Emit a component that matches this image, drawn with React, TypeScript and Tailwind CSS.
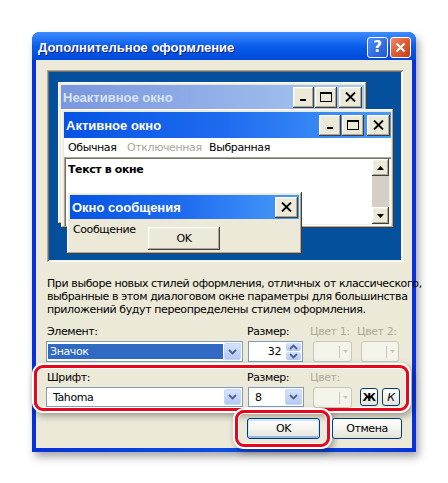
import React from 'react';

const classic =
  'bg-[#ece9d8] shadow-[inset_-1px_-1px_#404040,inset_1px_1px_#ffffff,inset_-2px_-2px_#aca899,inset_2px_2px_#f1efe2]';
const sunken =
  'shadow-[inset_1px_1px_#aca899,inset_2px_2px_#716f64,inset_-1px_-1px_#ffffff,inset_-2px_-2px_#f1efe2]';
const xpBtn =
  'rounded-[3px] border border-[#003c74] bg-gradient-to-b from-[#ffffff] via-[#f4f3ee] to-[#e3e2da] flex items-center justify-center';
const capText = "font-['Liberation_Sans',sans-serif] font-bold text-[13px] tracking-[0px] whitespace-nowrap";

function CapMin() {
  return (
    <svg width="11" height="10" viewBox="0 0 11 10">
      <rect x="2" y="7" width="6" height="2" fill="#000" />
    </svg>
  );
}

function CapMax() {
  return (
    <svg width="12" height="10" viewBox="0 0 12 10">
      <rect x="0.5" y="0.5" width="11" height="9" fill="none" stroke="#000" />
      <rect x="0" y="0" width="12" height="2" fill="#000" />
    </svg>
  );
}

function CapClose() {
  return (
    <svg width="11" height="10" viewBox="0 0 11 10">
      <path d="M1 0.5 L10 9.5 M10 0.5 L1 9.5" stroke="#000" strokeWidth="1.8" />
    </svg>
  );
}

function CapBtn({ children, w = 'w-[22px]' }: { children: React.ReactNode; w?: string }) {
  return <div className={`${classic} ${w} h-[21px] shrink-0 flex items-center justify-center`}>{children}</div>;
}

function Chevron({ up }: { up?: boolean }) {
  return (
    <svg width="9" height="6" viewBox="0 0 9 6">
      <path d={up ? 'M1 5 L4.5 1.5 L8 5' : 'M1 1 L4.5 4.5 L8 1'} fill="none" stroke="#4d6185" strokeWidth="1.8" />
    </svg>
  );
}

function DropBtn() {
  return (
    <div className="w-[17px] h-full shrink-0 rounded-[2px] border border-[#c7d6fb] bg-gradient-to-b from-[#d6e2fd] to-[#b3c8f6] flex items-center justify-center">
      <Chevron />
    </div>
  );
}

function DisabledColor({ w }: { w: string }) {
  return (
    <div className={`${w} h-[21px] rounded-[3px] border border-[#c9c7ba] bg-[#f5f4ea] flex items-center justify-end pr-[3px]`}>
      <div className="w-px h-[12px] bg-[#c9c7ba] mr-[3px]" />
      <svg width="5" height="3" viewBox="0 0 5 3">
        <path d="M0 0 L5 0 L2.5 3 Z" fill="#c9c7ba" />
      </svg>
    </div>
  );
}

function Preview() {
  return (
    <div className="shrink-0 ml-[1px] mt-[10px] w-[356px] h-[192px] p-[2px] shadow-[inset_1px_1px_#aca899,inset_-1px_-1px_#ffffff,inset_2px_2px_#716f64,inset_-2px_-2px_#f1efe2]">
      <div className="relative w-full h-full bg-[#04509c] overflow-hidden">
        {/* inactive window */}
        <div className={`absolute left-[9px] top-[10px] w-[309px] h-[142px] p-[3px] ${classic}`}>
          <div className="h-[24px] flex items-center bg-gradient-to-r from-[#7a96df] to-[#a8c9f1] pl-[2px] pr-[2px]">
            <span className={`${capText} text-[#d8e4f8]`}>Неактивное окно</span>
            <div className="ml-auto flex items-center">
              <CapBtn w="w-[21px]"><CapMin /></CapBtn>
              <div className="w-px" />
              <CapBtn><CapMax /></CapBtn>
              <div className="w-[2px]" />
              <CapBtn w="w-[23px]"><CapClose /></CapBtn>
            </div>
          </div>
        </div>

        {/* active window */}
        <div className={`absolute left-[12px] top-[37px] w-[333px] h-[119px] p-[3px] pb-[2px] flex flex-col ${classic}`}>
          <div className="h-[26px] shrink-0 flex items-center bg-gradient-to-r from-[#0453e4] via-[#1f6cf0] to-[#4a9cf8] pl-[2px] pr-[1px]">
            <span className={`${capText} text-white`}>Активное окно</span>
            <div className="ml-auto flex items-center">
              <CapBtn><CapMin /></CapBtn>
              <div className="w-px" />
              <CapBtn><CapMax /></CapBtn>
              <div className="w-[3px]" />
              <CapBtn w="w-[23px]"><CapClose /></CapBtn>
            </div>
          </div>
          <div className="h-[19px] shrink-0 bg-white flex items-center pl-[4px]">
            <span className="w-[59px]">Обычная</span>
            <span className="w-[82px] text-[#aca899]">Отключенная</span>
            <span>Выбранная</span>
          </div>
          <div className={`flex-1 bg-white p-[2px] flex ${sunken}`}>
            <div className="flex-1 pl-[2px] pt-[4px] font-bold">Текст в окне</div>
            <div className="w-[17px] flex flex-col bg-[#d4d0c8]">
              <div className={`${classic} h-[17px] flex items-center justify-center`}>
                <svg width="7" height="4" viewBox="0 0 7 4"><path d="M0 4 L3.5 0 L7 4 Z" fill="#000" /></svg>
              </div>
              <div className="flex-1" />
              <div className={`${classic} h-[17px] flex items-center justify-center`}>
                <svg width="7" height="4" viewBox="0 0 7 4"><path d="M0 0 L7 0 L3.5 4 Z" fill="#000" /></svg>
              </div>
            </div>
          </div>
        </div>

        {/* message box */}
        <div className={`absolute left-[18px] top-[120px] w-[235px] h-[62px] p-[3px] flex flex-col ${classic}`}>
          <div className="h-[24px] shrink-0 flex items-center bg-gradient-to-r from-[#0453e4] via-[#1f6cf0] to-[#4a9cf8] pl-[2px] pr-[1px]">
            <span className={`${capText} text-white`}>Окно сообщения</span>
            <div className="ml-auto">
              <CapBtn w="w-[23px]"><CapClose /></CapBtn>
            </div>
          </div>
          <div className="flex items-start pl-[3px] pt-[4px]">
            <span className="w-[75px]">Сообщение</span>
            <div className={`${classic} mt-[4px] w-[72px] h-[23px] flex items-center justify-center`}>OK</div>
          </div>
        </div>
      </div>
    </div>
  );
}

export default function App() {
  return (
    <div className="w-[448px] h-[483px] bg-white overflow-hidden pt-[32px] pl-[32px] font-['DejaVu_Sans',sans-serif] text-[11px] leading-[13px] tracking-[-0.4px] text-black">
      <div className="w-[384px] h-[420px] flex flex-col rounded-t-[8px] bg-gradient-to-r from-[#0831d9] via-[#0a4fe4] to-[#0831d9] shadow-[3px_5px_9px_rgba(0,0,0,0.35)]">
        {/* title bar */}
        <div className="h-[28px] shrink-0 rounded-t-[8px] bg-gradient-to-b from-[#3d8cff] via-[#0a5deb] to-[#0048d8] flex items-center pl-[6px] pr-[5px] pt-[2px]">
          <span className={`${capText} text-white [text-shadow:1px_1px_#0a1a8a]`}>Дополнительное оформление</span>
          <div className="ml-auto flex items-center gap-[2px]">
            <div className="w-[21px] h-[21px] rounded-[3px] border border-white bg-gradient-to-br from-[#4f8ef8] to-[#1f55d6] flex items-center justify-center text-white font-bold text-[15px] tracking-normal">
              ?
            </div>
            <div className="w-[21px] h-[21px] rounded-[3px] border border-white bg-gradient-to-br from-[#ef8a66] via-[#e15a31] to-[#c4401c] flex items-center justify-center">
              <svg width="11" height="11" viewBox="0 0 11 11">
                <path d="M1.5 1.5 L9.5 9.5 M9.5 1.5 L1.5 9.5" stroke="#fff" strokeWidth="2.2" />
              </svg>
            </div>
          </div>
        </div>

        {/* client area */}
        <div className="flex-1 min-h-0 mx-[4px] mb-[4px] bg-[#ece9d8] pl-[10px] flex flex-col">
          <Preview />

          <div className="shrink-0 mt-[15px] pl-[1px] whitespace-nowrap">
            <div>При выборе новых стилей оформления, отличных от классического,</div>
            <div>выбранные в этом диалоговом окне параметры для большинства</div>
            <div>приложений будут переопределены стилем оформления.</div>
          </div>

          <div className="shrink-0 mt-[9px] flex h-[13px]">
            <span className="w-[201px] pl-[1px]">Элемент:</span>
            <span className="w-[63px]">Размер:</span>
            <span className="w-[47px] text-[#aca899]">Цвет 1:</span>
            <span className="text-[#aca899]">Цвет 2:</span>
          </div>

          <div className="shrink-0 mt-[3px] flex h-[21px]">
            <div className="w-[197px] h-[21px] border border-[#7f9db9] bg-white flex p-[1px] gap-[1px]">
              <div className="flex-1 bg-[#316ac5] text-white flex items-center pl-[2px] my-px">Значок</div>
              <DropBtn />
            </div>
            <div className="ml-[5px] w-[55px] h-[21px] border border-[#7f9db9] bg-white flex p-[1px]">
              <div className="flex-1 flex items-center justify-end pr-[5px]">32</div>
              <div className="w-[15px] flex flex-col gap-px">
                <div className="flex-1 rounded-[2px] bg-gradient-to-b from-[#d6e2fd] to-[#b3c8f6] flex items-center justify-center">
                  <Chevron up />
                </div>
                <div className="flex-1 rounded-[2px] bg-gradient-to-b from-[#d6e2fd] to-[#b3c8f6] flex items-center justify-center">
                  <Chevron />
                </div>
              </div>
            </div>
            <div className="ml-[10px]"><DisabledColor w="w-[39px]" /></div>
            <div className="ml-[9px]"><DisabledColor w="w-[38px]" /></div>
          </div>

          {/* font row, highlighted */}
          <div className="shrink-0 mt-[3px] ml-[-12px] w-[375px] h-[46px] rounded-[9px] border-[3px] border-[#e5081c] shadow-[0_0_0_2px_#ffffff,2px_3px_7px_2px_rgba(0,0,0,0.35),inset_0_0_0_1px_#ffffff] pl-[9px] pt-[3px] flex flex-col">
            <div className="flex h-[13px]">
              <span className="w-[201px] pl-[1px]">Шрифт:</span>
              <span className="w-[63px]">Размер:</span>
              <span className="text-[#aca899]">Цвет:</span>
            </div>
            <div className="mt-[3px] flex h-[20px]">
              <div className="w-[197px] h-[20px] border border-[#7f9db9] bg-white flex p-[1px]">
                <div className="flex-1 flex items-center pl-[5px]">Tahoma</div>
                <DropBtn />
              </div>
              <div className="ml-[5px] w-[56px] h-[20px] border border-[#7f9db9] bg-white flex p-[1px]">
                <div className="flex-1 flex items-center pl-[5px]">8</div>
                <DropBtn />
              </div>
              <div className="ml-[9px]"><DisabledColor w="w-[39px]" /></div>
              <div className={`ml-[8px] w-[18px] h-[18px] mt-px ${xpBtn} font-bold text-[11px]`}>Ж</div>
              <div className={`ml-[4px] w-[18px] h-[18px] mt-px ${xpBtn} italic text-[11px]`}>К</div>
            </div>
          </div>

          {/* buttons */}
          <div className="shrink-0 mt-[-1px] flex justify-end pr-[10px]">
            <div className="w-[95px] h-[37px] rounded-[9px] border-[3px] border-[#e5081c] shadow-[0_0_0_2px_#ffffff,2px_3px_7px_2px_rgba(0,0,0,0.35),inset_0_0_0_1px_#ffffff] pl-[9px] pt-[5px]">
              <div className={`w-[73px] h-[21px] ${xpBtn} shadow-[inset_0_1px_0_1px_#cee7ff,inset_0_-1px_0_1px_#98b8ea]`}>OK</div>
            </div>
            <div className={`ml-[2px] mt-[8px] w-[70px] h-[21px] ${xpBtn}`}>Отмена</div>
          </div>
        </div>
      </div>
    </div>
  );
}
